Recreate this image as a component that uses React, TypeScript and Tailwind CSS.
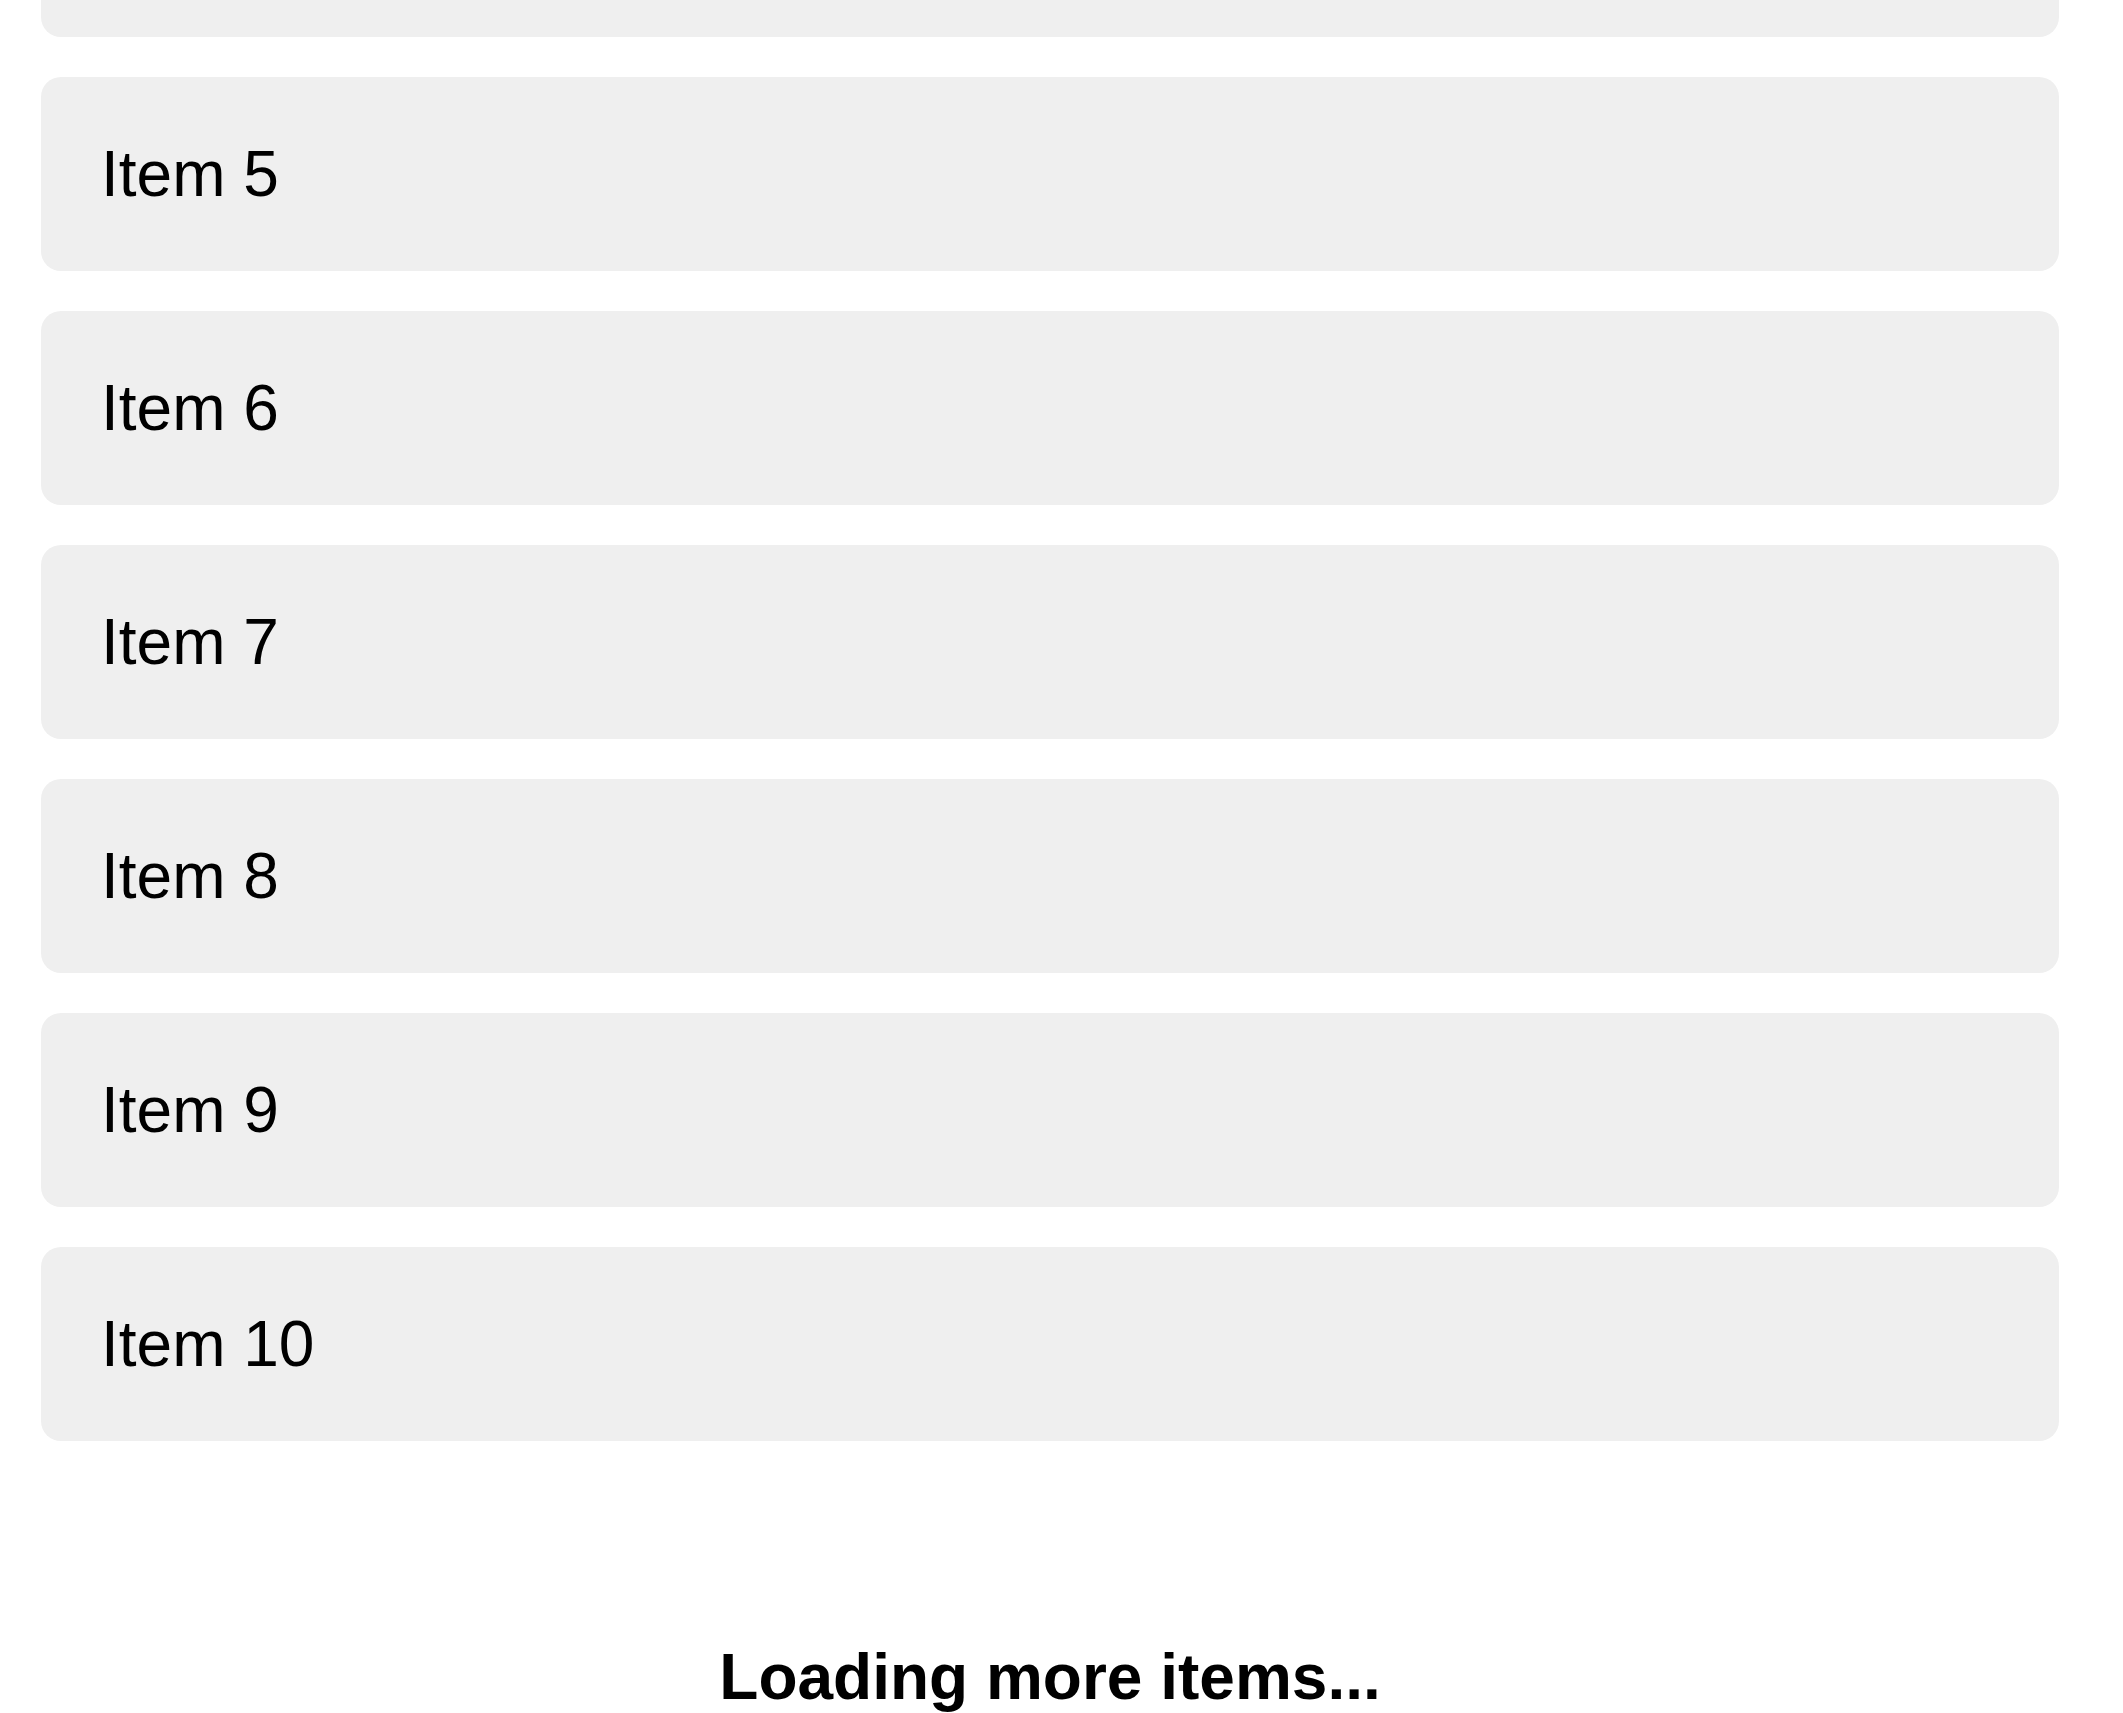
const items = [5, 6, 7, 8, 9, 10];

export default function App() {
  return (
    <div
      className="h-[1713px] w-full overflow-hidden bg-white text-black"
      style={{ fontFamily: '"Liberation Sans", Arial, sans-serif' }}
    >
      <div className="w-[2100px] px-[41px] -mt-[157px]">
        <div className="flex flex-col gap-[40px]">
          {/* item 4 is scrolled mostly out of view */}
          <div className="h-[194px] rounded-[20px] bg-[#efefef]" />
          {items.map((n) => (
            <div
              key={n}
              className="flex h-[194px] items-center rounded-[20px] bg-[#efefef] pl-[60px] text-[64px] leading-none"
            >
              Item {n}
            </div>
          ))}
        </div>
        <div className="pt-[199px] text-center text-[64px] font-bold leading-[75px]">
          Loading more items...
        </div>
      </div>
    </div>
  );
}
